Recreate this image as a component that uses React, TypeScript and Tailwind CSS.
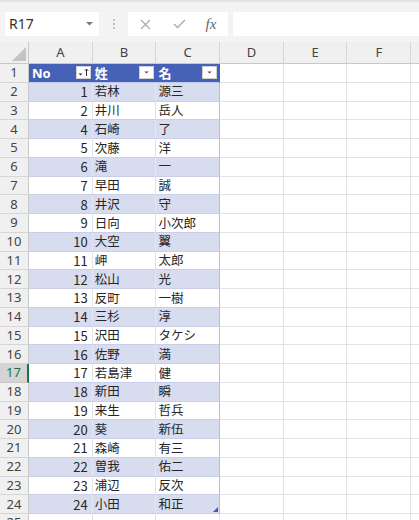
import React from 'react';

const rows: [number, string, string][] = [
  [1, '若林', '源三'],
  [2, '井川', '岳人'],
  [4, '石崎', '了'],
  [5, '次藤', '洋'],
  [6, '滝', '一'],
  [7, '早田', '誠'],
  [8, '井沢', '守'],
  [9, '日向', '小次郎'],
  [10, '大空', '翼'],
  [11, '岬', '太郎'],
  [12, '松山', '光'],
  [13, '反町', '一樹'],
  [14, '三杉', '淳'],
  [15, '沢田', 'タケシ'],
  [16, '佐野', '満'],
  [17, '若島津', '健'],
  [18, '新田', '瞬'],
  [19, '来生', '哲兵'],
  [20, '葵', '新伍'],
  [21, '森崎', '有三'],
  [22, '曽我', '佑二'],
  [23, '浦辺', '反次'],
  [24, '小田', '和正'],
];

const uiFont = { fontFamily: '"Noto Sans", "Noto Sans CJK JP", sans-serif' };
const cjkFont = { fontFamily: '"Noto Sans CJK JP", "Noto Sans", sans-serif' };

function FilterBtn({ sorted }: { sorted?: boolean }) {
  return (
    <div className="mt-[2px] mr-[2px] flex h-[13px] w-[15px] shrink-0 items-center justify-center border border-[#d0d0d0] bg-white">
      <svg width="13" height="11" viewBox="0 0 13 11">
        {sorted ? (
          <>
            <polygon points="1.5,6.5 5.5,6.5 3.5,8.5" fill="#333" />
            <line x1="9.5" y1="2" x2="9.5" y2="9" stroke="#333" strokeWidth="1" />
            <polyline points="7.8,3.8 9.5,2 11.2,3.8" fill="none" stroke="#333" strokeWidth="1" />
          </>
        ) : (
          <polygon points="4.5,4.5 8.5,4.5 6.5,6.5" fill="#444" />
        )}
      </svg>
    </div>
  );
}

function RowHeader({ n, active }: { n: number; active?: boolean }) {
  return (
    <div
      className={
        'flex h-full w-[29px] shrink-0 items-center justify-center border-b text-[13px] leading-none ' +
        (active
          ? 'border-b-[#c8c8c8] border-r-2 border-r-[#217346] bg-[#d4d4d4] text-[#217346]'
          : 'border-b-[#d6d6d6] border-r border-r-[#c8c8c8] bg-[#f0f0f0] text-[#444]')
      }
      style={uiFont}
    >
      {n}
    </div>
  );
}

function EmptyCells() {
  return (
    <>
      {[0, 1, 2, 3].map((i) => (
        <div key={i} className="h-full w-[63.7px] shrink-0 border-b border-r border-[#e2e2e2] bg-white" />
      ))}
    </>
  );
}

export default function App() {
  return (
    <div className="h-[520px] w-[419px] overflow-hidden bg-[#f3f3f3]" style={uiFont}>
      {/* toolbar */}
      <div className="h-[2px] bg-[#e3e3e3]" />
      <div className="flex h-[40px] items-start pt-[10px]">
        <div className="ml-[5px] flex h-[24px] w-[94px] items-center justify-between bg-white pl-[4px] pr-[6px]">
          <span className="text-[14px] leading-none text-[#333]">R17</span>
          <svg width="7" height="4" viewBox="0 0 7 4">
            <polygon points="0,0 7,0 3.5,3.5" fill="#777" />
          </svg>
        </div>
        <div className="flex h-[24px] w-[29px] flex-col items-center justify-center gap-[2px]">
          <div className="h-[2px] w-[2px] rounded-full bg-[#b0b0b0]" />
          <div className="h-[2px] w-[2px] rounded-full bg-[#b0b0b0]" />
          <div className="h-[2px] w-[2px] rounded-full bg-[#b0b0b0]" />
        </div>
        <div className="flex h-[24px] w-[100px] items-center bg-white">
          <div className="flex w-[34px] justify-center">
            <svg width="11" height="11" viewBox="0 0 11 11">
              <path d="M1 1 L10 10 M10 1 L1 10" stroke="#a8a8a8" strokeWidth="1.2" />
            </svg>
          </div>
          <div className="flex w-[34px] justify-center">
            <svg width="13" height="10" viewBox="0 0 13 10">
              <path d="M1 5 L4.5 8.5 L12 1" fill="none" stroke="#a8a8a8" strokeWidth="1.3" />
            </svg>
          </div>
          <div className="flex w-[30px] justify-center">
            <span
              className="text-[15px] italic leading-none text-[#666]"
              style={{ fontFamily: '"Liberation Serif", "DejaVu Serif", serif' }}
            >
              fx
            </span>
          </div>
        </div>
        <div className="ml-[5px] h-[24px] flex-1 bg-white" />
      </div>

      {/* column headers */}
      <div className="flex h-[22px] bg-[#f0f0f0]">
        <div className="relative h-full w-[29px] shrink-0 border-b border-r border-[#c8c8c8]">
          <svg className="absolute bottom-[2px] right-[2px]" width="14" height="14" viewBox="0 0 14 14">
            <polygon points="14,0 14,14 0,14" fill="#c4c4c4" />
          </svg>
        </div>
        {['A', 'B', 'C', 'D', 'E', 'F', ''].map((c, idx) => (
          <div
            key={idx}
            className="flex h-full w-[63.7px] shrink-0 items-center justify-center border-b border-r border-b-[#c8c8c8] border-r-[#d6d6d6] text-[13px] leading-none text-[#444]"
          >
            {c}
          </div>
        ))}
      </div>

      {/* table header row 1 */}
      <div className="flex h-[18.75px]">
        <RowHeader n={1} />
        <div
          className="flex h-full w-[63.7px] shrink-0 items-start justify-between border-b border-b-[#c3c9e8] bg-[#4661b8] pl-[3px] text-[13px] font-bold text-white"
          style={uiFont}
        >
          <span className="mt-[1px] leading-[16px]">No</span>
          <FilterBtn sorted />
        </div>
        <div
          className="flex h-full w-[63.7px] shrink-0 items-start justify-between border-b border-b-[#c3c9e8] bg-[#4661b8] pl-[2px] text-[13px] font-bold text-white"
          style={cjkFont}
        >
          <span className="mt-[1px] leading-[16px]">姓</span>
          <FilterBtn />
        </div>
        <div
          className="flex h-full w-[63.7px] shrink-0 items-start justify-between border-b border-r border-b-[#c3c9e8] border-r-[#4661b8] bg-[#4661b8] pl-[2px] text-[13px] font-bold text-white"
          style={cjkFont}
        >
          <span className="mt-[1px] leading-[16px]">名</span>
          <FilterBtn />
        </div>
        <EmptyCells />
      </div>

      {rows.map(([no, sei, mei], i) => {
        const rowNum = i + 2;
        const band = rowNum % 2 === 0;
        const last = i === rows.length - 1;
        const bg = band ? 'bg-[#d7dcef]' : 'bg-white';
        const innerR = band ? 'border-r-[#e3e6f4]' : 'border-r-[#e2e2e2]';
        return (
          <div key={rowNum} className="flex h-[18.75px]">
            <RowHeader n={rowNum} active={rowNum === 17} />
            <div
              className={`flex h-full w-[63.7px] shrink-0 items-center justify-end border-b border-r border-b-[#c9cfea] pr-[4px] text-[13px] leading-none text-[#262626] ${bg} ${innerR}`}
              style={cjkFont}
            >
              {no}
            </div>
            <div
              className={`flex h-full w-[63.7px] shrink-0 items-center border-b border-r border-b-[#c9cfea] pl-[2px] text-[12.5px] leading-none text-[#262626] ${bg} ${innerR}`}
              style={cjkFont}
            >
              {sei}
            </div>
            <div
              className={`relative flex h-full w-[63.7px] shrink-0 items-center border-b border-r border-b-[#c9cfea] border-r-[#b3bce3] pl-[2px] text-[12.5px] leading-none text-[#262626] ${bg}`}
              style={cjkFont}
            >
              {mei}
              {last && (
                <svg className="absolute bottom-[1px] right-[1px]" width="5" height="5" viewBox="0 0 5 5">
                  <polygon points="5,0 5,5 0,5" fill="#3e5bb8" />
                </svg>
              )}
            </div>
            <EmptyCells />
          </div>
        );
      })}

      <div className="flex h-[18.75px]">
        <RowHeader n={25} />
        {[0, 1, 2].map((k) => (
          <div key={k} className="h-full w-[63.7px] shrink-0 border-b border-r border-[#e2e2e2] bg-white" />
        ))}
        <EmptyCells />
      </div>
    </div>
  );
}
